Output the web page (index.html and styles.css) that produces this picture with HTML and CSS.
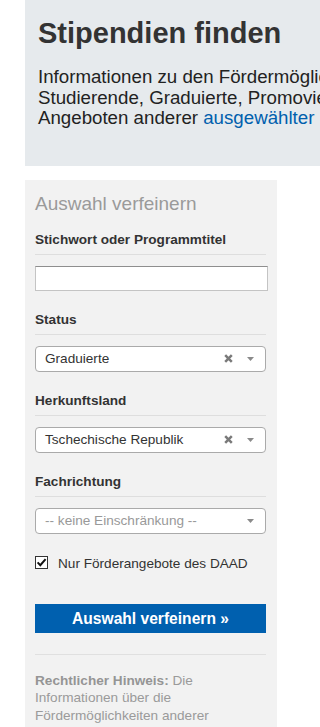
FILE: index.html
```html
<!DOCTYPE html>
<html lang="de">
<head>
<meta charset="utf-8">
<title>Stipendien finden</title>
<link rel="stylesheet" href="styles.css">
</head>
<body>
<div class="page">
  <header class="intro">
    <h1 class="intro-title">Stipendien finden</h1>
    <p class="intro-text">
      <span class="intro-line">Informationen zu den Fördermöglichkeiten des DAAD für ausländische</span>
      <span class="intro-line">Studierende, Graduierte, Promovierte und Wissenschaftler sowie zu</span>
      <span class="intro-line">Angeboten anderer <a class="intro-link" href="#">ausgewählter Förderorganisationen</a>.</span>
    </p>
  </header>

  <aside class="sidebar">
    <h2 class="sidebar-title">Auswahl verfeinern</h2>

    <div class="field-label field-label-first">Stichwort oder Programmtitel</div>
    <div class="text-input"></div>

    <div class="field-label">Status</div>
    <div class="select">
      <span class="select-value">Graduierte</span>
      <svg class="select-clear" width="9" height="9" viewBox="0 0 9 9"><path d="M1.2 1.2L7.8 7.8M7.8 1.2L1.2 7.8" stroke="#7a7a7a" stroke-width="2.5"/></svg>
      <svg class="select-arrow" width="7" height="4" viewBox="0 0 7 4"><path d="M0 0H7L3.5 4Z" fill="#8a8a8a"/></svg>
    </div>

    <div class="field-label">Herkunftsland</div>
    <div class="select">
      <span class="select-value">Tschechische Republik</span>
      <svg class="select-clear" width="9" height="9" viewBox="0 0 9 9"><path d="M1.2 1.2L7.8 7.8M7.8 1.2L1.2 7.8" stroke="#7a7a7a" stroke-width="2.5"/></svg>
      <svg class="select-arrow" width="7" height="4" viewBox="0 0 7 4"><path d="M0 0H7L3.5 4Z" fill="#8a8a8a"/></svg>
    </div>

    <div class="field-label">Fachrichtung</div>
    <div class="select">
      <span class="select-value select-placeholder">-- keine Einschränkung --</span>
      <svg class="select-arrow" width="7" height="4" viewBox="0 0 7 4"><path d="M0 0H7L3.5 4Z" fill="#8a8a8a"/></svg>
    </div>

    <label class="check-row">
      <span class="check-box"><svg width="11" height="11" viewBox="0 0 11 11"><path d="M1.6 5.4L4.3 8.2L9.6 2.2" fill="none" stroke="#111" stroke-width="2"/></svg></span>
      <span class="check-text">Nur Förderangebote des DAAD</span>
    </label>

    <button class="submit" type="button">Auswahl verfeinern »</button>

    <div class="divider"></div>

    <p class="legal"><strong class="legal-strong">Rechtlicher Hinweis:</strong> Die Informationen über die Fördermöglichkeiten anderer Organisationen beruhen auf Angaben dieser Organisationen. Der DAAD übernimmt keine Gewähr für die Richtigkeit.</p>
  </aside>
</div>
</body>
</html>
```

FILE: styles.css
```css
html, body {
  margin: 0;
  padding: 0;
  background: #ffffff;
  overflow-x: hidden;
}

body {
  font-family: "Liberation Sans", Arial, sans-serif;
  color: #333333;
}

.page {
  padding-left: 25px;
}

.intro {
  background: #e6eaed;
  padding: 17px 0 37px 13px;
  overflow: hidden;
}

.intro-title {
  margin: 0;
  font-size: 29px;
  line-height: 32px;
  font-weight: bold;
  color: #333333;
}

.intro-text {
  margin: 18px 0 0;
  font-size: 18.7px;
  line-height: 20.6px;
  color: #222222;
}

.intro-line {
  display: block;
  white-space: nowrap;
}

.intro-link {
  color: #0060ad;
  text-decoration: none;
}

.sidebar {
  width: 252px;
  box-sizing: border-box;
  margin-top: 14px;
  padding: 13px 11px 30px 10px;
  background: #f2f2f2;
}

.sidebar-title {
  margin: 0;
  font-size: 19px;
  line-height: 22px;
  font-weight: normal;
  color: #9a9a9a;
}

.field-label {
  margin: 19px 0 11px;
  padding: 1px 0 5px;
  border-bottom: 1px solid #dedede;
  font-size: 13.6px;
  line-height: 18px;
  font-weight: bold;
  color: #333333;
}

.field-label-first {
  margin-top: 15px;
}

.text-input {
  width: calc(100% + 2px);
  height: 25px;
  box-sizing: border-box;
  background: #ffffff;
  border: 1px solid #c4c4c4;
  border-top-color: #8e8e8e;
}

.select {
  display: flex;
  align-items: center;
  height: 26px;
  box-sizing: border-box;
  padding: 0 11px 0 9px;
  background: #ffffff;
  border: 1px solid #aaaaaa;
  border-radius: 4px;
  font-size: 13.6px;
  color: #333333;
}

.select-value {
  flex: 1;
  white-space: nowrap;
}

.select-placeholder {
  color: #999999;
}

.select-clear {
  margin-right: 14px;
}

.check-row {
  display: flex;
  align-items: flex-start;
  gap: 10px;
  margin-top: 21px;
  font-size: 13.6px;
  line-height: 18px;
  color: #333333;
}

.check-box {
  display: flex;
  align-items: center;
  justify-content: center;
  width: 13px;
  height: 13px;
  box-sizing: border-box;
  margin-top: 1px;
  border: 1px solid #333333;
  background: #ffffff;
}

.submit {
  display: block;
  width: 100%;
  height: 29px;
  margin-top: 31px;
  padding: 0;
  border: 0;
  background: #0060af;
  color: #ffffff;
  font-family: "Liberation Sans", Arial, sans-serif;
  font-size: 15.6px;
  font-weight: bold;
  line-height: 29px;
  text-align: center;
}

.divider {
  margin-top: 21px;
  height: 1px;
  background: #e0e0e0;
}

.legal {
  margin: 17px 0 0;
  font-size: 13.6px;
  line-height: 17.7px;
  color: #9a9a9a;
}

.legal-strong {
  font-weight: bold;
  color: #959595;
}
```
